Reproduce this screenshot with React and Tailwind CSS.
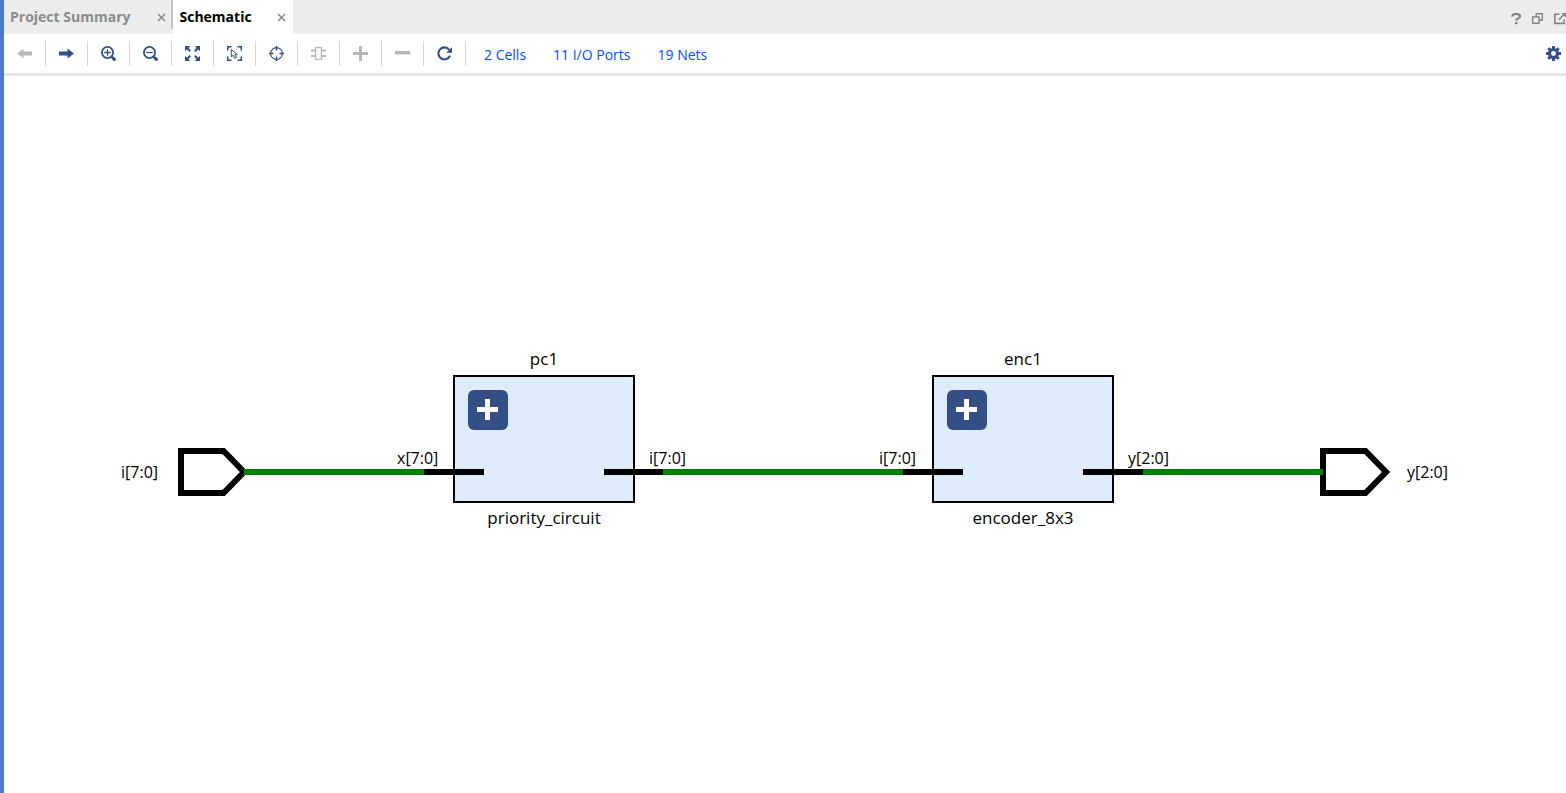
const FONT = "font-['Open_Sans','Noto_Sans',sans-serif]";

function ArrowLeft() {
  return (
    <svg viewBox="0 0 15 15" className="size-[15px]" aria-hidden="true">
      <path d="M0 7.5 L6.5 2.8 V5.5 H15 V9.5 H6.5 V12.2 Z" fill="currentColor" />
    </svg>
  );
}

function ArrowRight() {
  return (
    <svg viewBox="0 0 15 15" className="size-[15px]" aria-hidden="true">
      <path d="M15 7.5 L8.5 2.5 V5.5 H0 V9.5 H8.5 V12.5 Z" fill="currentColor" />
    </svg>
  );
}

function Zoom({ plus }) {
  return (
    <svg viewBox="0 0 15 15" className="size-[15px]" fill="none" stroke="currentColor" aria-hidden="true">
      <circle cx="6.5" cy="6.5" r="5.6" strokeWidth="1.8" />
      <path d="M10.4 10.4 L11.5 11.5" strokeWidth="2" />
      <path d="M12 12 L13.4 13.4" strokeWidth="3" strokeLinecap="round" />
      <path d={plus ? "M3.2 6.5 H9.8 M6.5 3.2 V9.8" : "M3.2 6.5 H9.8"} strokeWidth="1.3" />
    </svg>
  );
}

function Fit() {
  return (
    <svg viewBox="0 0 15 15" className="size-[15px]" aria-hidden="true">
      <g fill="currentColor">
        <path d="M0 0 H5 L3.6 1.9 L5.9 4.6 L4.6 5.9 L1.9 3.6 L0 5 Z" />
        <path d="M15 0 H10 L11.4 1.9 L9.1 4.6 L10.4 5.9 L13.1 3.6 L15 5 Z" />
        <path d="M0 15 H5 L3.6 13.1 L5.9 10.4 L4.6 9.1 L1.9 11.4 L0 10 Z" />
        <path d="M15 15 H10 L11.4 13.1 L9.1 10.4 L10.4 9.1 L13.1 11.4 L15 10 Z" />
      </g>
    </svg>
  );
}

function SelectArea() {
  return (
    <svg viewBox="0 0 15 15" className="size-[15px]" fill="none" stroke="currentColor" aria-hidden="true">
      <path d="M0.75 4.5 V0.75 H4.5 M10.5 0.75 H14.25 V4.5 M14.25 10.5 V14.25 H10.5 M4.5 14.25 H0.75 V10.5" strokeWidth="1.5" />
      <path d="M4.3 3.5 V10.8 L6.2 9.3 L7.8 12.4 L9.4 11.6 L7.9 8.7 L10.4 8.6 Z" strokeWidth="1" />
    </svg>
  );
}

function Crosshair() {
  return (
    <svg viewBox="0 0 15 15" className="size-[15px]" fill="none" stroke="currentColor" aria-hidden="true">
      <circle cx="7.5" cy="7.5" r="5.9" strokeWidth="1.2" />
      <path d="M7.5 0 V4.5 M7.5 10.5 V15 M0 7.5 H4.5 M10.5 7.5 H15" strokeWidth="1.4" />
    </svg>
  );
}

function Chip() {
  return (
    <svg viewBox="0 0 15 15" className="size-[15px]" fill="none" stroke="currentColor" aria-hidden="true">
      <rect x="4.6" y="1.6" width="5.8" height="11.8" strokeWidth="1.3" />
      <path d="M0 4.5 H4.5 M0 10 H4.5 M10.5 4.5 H15 M10.5 10 H15" strokeWidth="2" />
    </svg>
  );
}

function Plus() {
  return (
    <svg viewBox="0 0 15 15" className="size-[15px]" aria-hidden="true">
      <path d="M0 6 H6 V0 H9 V6 H15 V9 H9 V15 H6 V9 H0 Z" fill="currentColor" />
    </svg>
  );
}

function Minus() {
  return (
    <svg viewBox="0 0 15 15" className="size-[15px]" aria-hidden="true">
      <path d="M0 5 H15 V8.5 H0 Z" fill="currentColor" />
    </svg>
  );
}

function Reload() {
  return (
    <svg viewBox="0 0 15 15" className="size-[15px]" aria-hidden="true">
      <path d="M12.2 3.8 A6 6 0 1 0 13 9.6" fill="none" stroke="currentColor" strokeWidth="2.1" />
      <path d="M15 1.2 V6.8 H9.2 Z" fill="currentColor" />
    </svg>
  );
}

function Gear() {
  return (
    <svg viewBox="0 0 15 15" className="size-[15px]" aria-hidden="true">
      <g fill="currentColor">
        {[0, 45, 90, 135].map((a) => (
          <rect key={a} x="6" y="0" width="3" height="15" rx="0.5" transform={`rotate(${a} 7.5 7.5)`} />
        ))}
        <circle cx="7.5" cy="7.5" r="5.5" />
      </g>
      <circle cx="7.5" cy="7.5" r="2.4" fill="#ffffff" />
    </svg>
  );
}

function Cross() {
  return (
    <svg viewBox="0 0 9 9" className="size-[9px]" aria-hidden="true">
      <path d="M1 1 L8 8 M8 1 L1 8" stroke="#858585" strokeWidth="1.4" />
    </svg>
  );
}

const TOOLS = [
  { label: "Back", icon: <ArrowLeft />, disabled: true },
  { label: "Forward", icon: <ArrowRight /> },
  { label: "Zoom in", icon: <Zoom plus /> },
  { label: "Zoom out", icon: <Zoom /> },
  { label: "Zoom fit", icon: <Fit /> },
  { label: "Select area", icon: <SelectArea /> },
  { label: "Autofit selection", icon: <Crosshair /> },
  { label: "Expand cell", icon: <Chip />, disabled: true },
  { label: "Add to schematic", icon: <Plus />, disabled: true },
  { label: "Remove from schematic", icon: <Minus />, disabled: true },
  { label: "Regenerate", icon: <Reload /> },
];

function Tab({ label, active }) {
  return (
    <div
      className={
        active
          ? "flex h-full items-center gap-[25px] bg-white pr-[7px] pl-1.5"
          : "flex h-full items-center gap-[27px] pr-[5px] pl-1.5"
      }
    >
      <button
        type="button"
        role="tab"
        aria-selected={!!active}
        className={
          active
            ? "text-sm font-bold whitespace-nowrap text-black"
            : "text-sm font-bold whitespace-nowrap text-[#8c8c8c]"
        }
      >
        {label}
      </button>
      <button type="button" aria-label={`Close ${label}`}>
        <Cross />
      </button>
    </div>
  );
}

function Cell({ name, type, className }) {
  return (
    <div className={`absolute flex w-[182px] flex-col items-center ${className}`}>
      <span className="h-7 text-[17px] leading-6">{name}</span>
      <div className="h-32 w-full border-2 border-black bg-[#deebf9] p-[13px]">
        <button
          type="button"
          aria-label={`Expand ${name}`}
          className="block size-10 rounded-md bg-[#334f85] text-white"
        >
          <svg viewBox="0 0 40 40" className="size-10" aria-hidden="true">
            <path d="M9 17 H17 V9 H22 V17 H30 V22 H22 V30 H17 V22 H9 Z" fill="currentColor" />
          </svg>
        </button>
      </div>
      <span className="pt-[3px] text-[17px] leading-6">{type}</span>
    </div>
  );
}

const LABELS = [
  { text: "i[7:0]", place: "left-0 top-[120px]" },
  { text: "x[7:0]", place: "left-[276px] top-[106px]" },
  { text: "i[7:0]", place: "left-[528px] top-[106px]" },
  { text: "i[7:0]", place: "left-[758px] top-[106px]" },
  { text: "y[2:0]", place: "left-[1007px] top-[106px]" },
  { text: "y[2:0]", place: "left-[1286px] top-[120px]" },
];

function Schematic() {
  return (
    <div className="relative h-[189px] w-[1328px] shrink-0 text-black">
      <Cell name="pc1" type="priority_circuit" className="top-[7px] left-[332px]" />
      <Cell name="enc1" type="encoder_8x3" className="top-[7px] left-[811px]" />
      <svg
        viewBox="0 0 1328 189"
        className="pointer-events-none absolute inset-0 size-full"
        fill="none"
        strokeWidth="6"
        aria-hidden="true"
      >
        <g stroke="#000000">
          <path d="M60 111 H102.5 L123 132 L102.5 153 H60 Z" />
          <path d="M1202 111 H1244.5 L1265 132 L1244.5 153 H1202 Z" />
          <path d="M303 132 H363 M483 132 H542 M782 132 H842 M962 132 H1022" />
        </g>
        <path d="M123 132 H303 M542 132 H782 M1022 132 H1202" stroke="#008000" />
      </svg>
      {LABELS.map(({ text, place }) => (
        <span key={place} className={`absolute text-base leading-6 whitespace-nowrap ${place}`}>
          {text}
        </span>
      ))}
    </div>
  );
}

export default function App() {
  return (
    <div className={`flex min-h-screen flex-col border-l-4 border-[#4b7bd1] bg-white ${FONT}`}>
      <header className="flex h-[34px] items-center justify-between overflow-hidden bg-[#ececec]">
        <div role="tablist" className="flex h-full">
          <Tab label="Project Summary" />
          <span className="h-[29px] w-0.5 bg-[#c3c3c3]" />
          <Tab label="Schematic" active />
        </div>
        <div className="flex items-center gap-[11px] pt-1 text-[#858585]">
          <button type="button" aria-label="Help">
            <svg viewBox="0 0 10 12" className="h-3 w-[10px]" aria-hidden="true">
              <path d="M1 3.8 C1.2 0.2 9 0 9 3.3 C9 5.6 5.2 5.2 5.2 7.8" fill="none" stroke="currentColor" strokeWidth="2.2" />
              <rect x="4" y="9" width="2.4" height="2.2" fill="currentColor" />
            </svg>
          </button>
          <button type="button" aria-label="Restore">
            <svg viewBox="0 0 11 12" className="h-3 w-[11px]" fill="none" stroke="currentColor" strokeWidth="1.4" aria-hidden="true">
              <path d="M4.2 4 V0.8 H10.3 V7.2 H7" />
              <rect x="0.7" y="3.9" width="6.3" height="6.4" />
            </svg>
          </button>
          <button type="button" aria-label="Float">
            <svg viewBox="0 0 12 12" className="size-3" fill="none" stroke="currentColor" aria-hidden="true">
              <path d="M5.5 1.2 H0.8 V10.4 H10.2 V6.6" strokeWidth="1.6" />
              <path d="M4.8 6.7 L10 1.5" strokeWidth="1.6" />
              <path d="M7.2 0 H12 V4.7 Z" fill="currentColor" stroke="none" />
            </svg>
          </button>
        </div>
      </header>
      <nav className="flex h-[42px] items-center justify-between border-b-3 border-[#e6e6e6] pr-[5px]">
        <div className="flex items-center">
          {TOOLS.map(({ label, icon, disabled }) => (
            <button
              key={label}
              type="button"
              aria-label={label}
              disabled={disabled}
              className="flex h-[25px] w-[42px] items-center justify-center border-r border-[#d4d4d4] text-[#334f85] disabled:text-[#b8b8b8]"
            >
              {icon}
            </button>
          ))}
          <div className="flex gap-[27px] pt-0.5 pl-[18px] text-sm whitespace-nowrap text-[#0050ff]">
            <a href="#cells">2 Cells</a>
            <a href="#ports">11 I/O Ports</a>
            <a href="#nets">19 Nets</a>
          </div>
        </div>
        <button type="button" aria-label="Settings" className="text-[#334f85]">
          <Gear />
        </button>
      </nav>
      <main className="flex flex-1 items-center justify-center overflow-hidden">
        <Schematic />
      </main>
    </div>
  );
}
